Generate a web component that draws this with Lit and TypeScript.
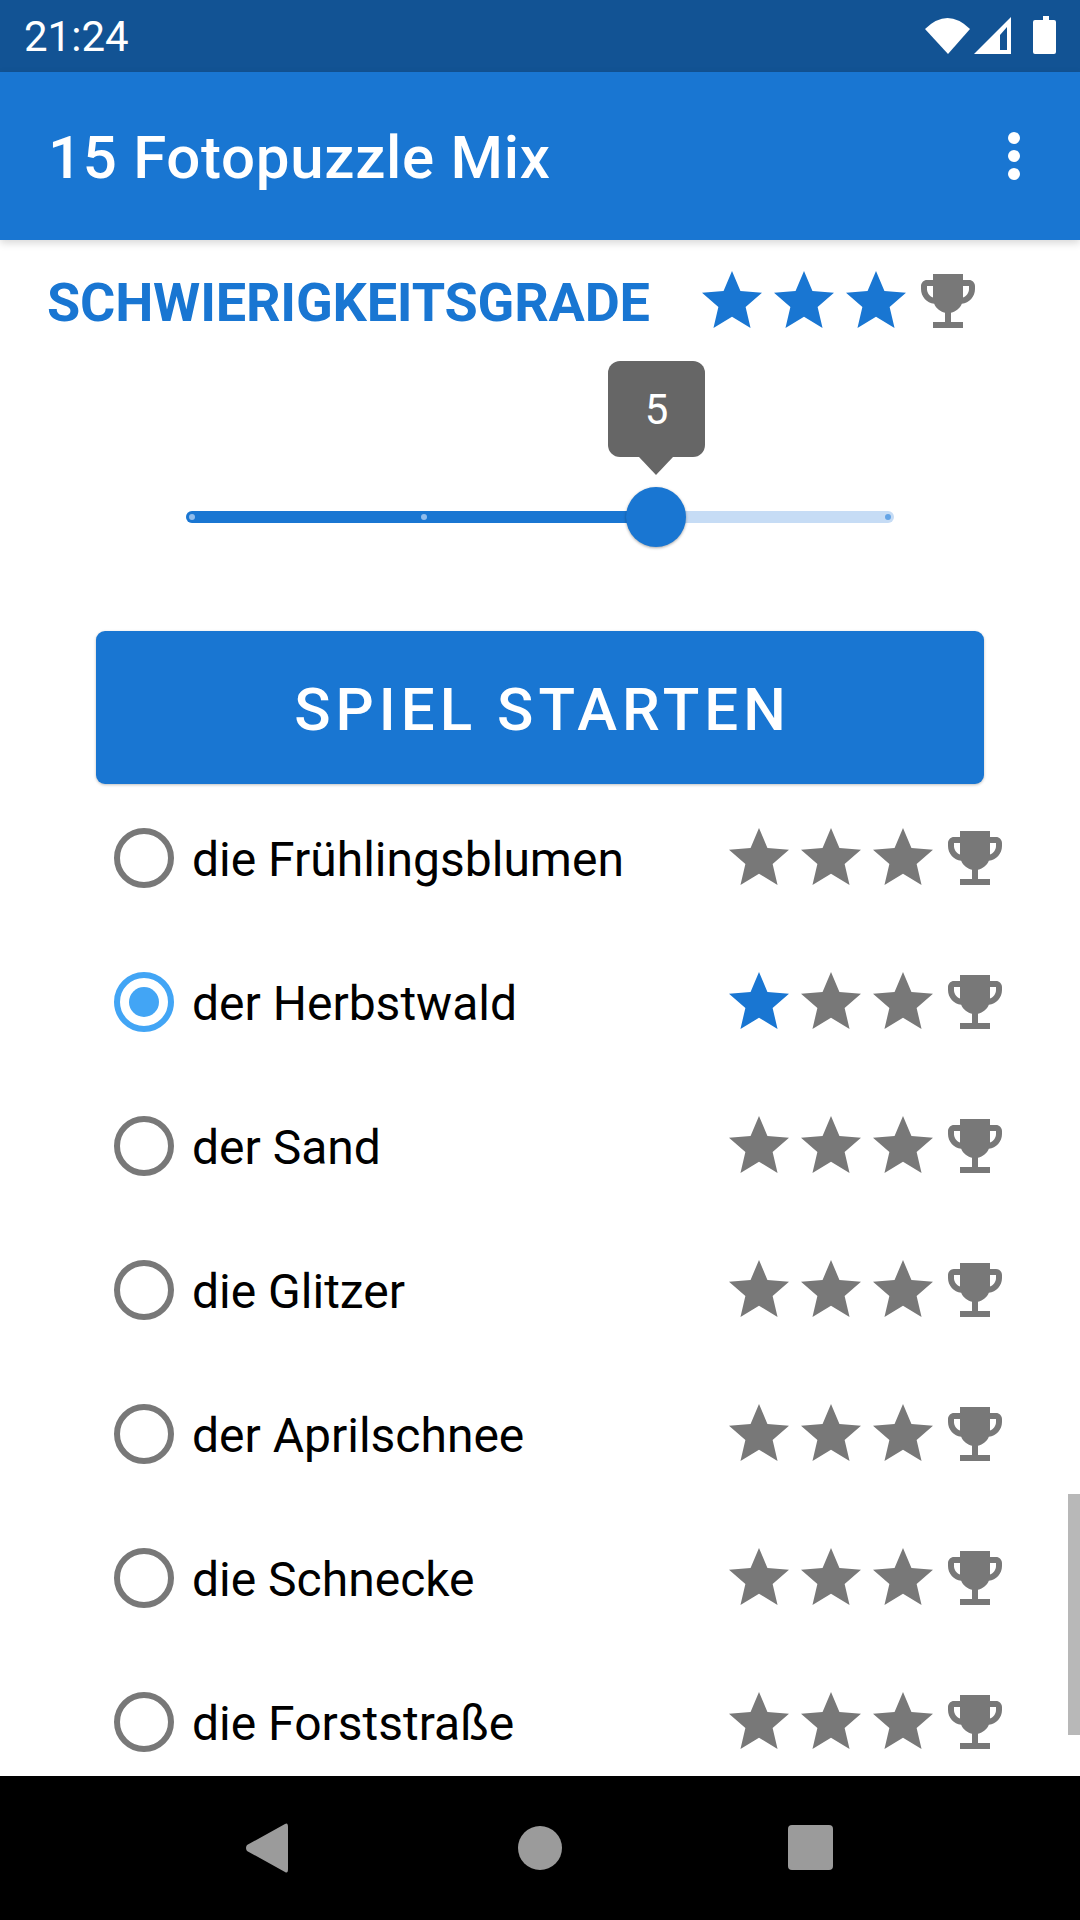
import { LitElement, html, css, svg } from "lit";
import { customElement } from "lit/decorators.js";

const STAR = "M12 17.27L18.18 21l-1.64-7.03L22 9.24l-7.19-.61L12 2 9.19 8.63 2 9.24l5.46 4.73L5.82 21z";
const TROPHY = "M19 5h-2V3H7v2H5c-1.1 0-2 .9-2 2v1c0 2.55 1.92 4.63 4.39 4.94.63 1.5 1.98 2.63 3.61 2.96V19H7v2h10v-2h-4v-3.1c1.63-.33 2.98-1.46 3.61-2.96C19.08 12.63 21 10.55 21 8V7c0-1.1-.9-2-2-2zM5 8V7h2v3.82C5.84 10.4 5 9.3 5 8zm14 0c0 1.3-.84 2.4-2 2.82V7h2v1z";

const icon = (d: string, on: boolean) => html`<svg class="ic ${on ? "on" : "off"}" viewBox="0 0 24 24"><path d=${d}></path></svg>`;
const rating = (n: number) => html`<div class="rating">
  ${[0, 1, 2].map((i) => icon(STAR, i < n))}${icon(TROPHY, false)}
</div>`;

const ITEMS = [
  "die Frühlingsblumen", "der Herbstwald", "der Sand", "die Glitzer",
  "der Aprilschnee", "die Schnecke", "die Forststraße",
];

@customElement("app-root")
export class AppRoot extends LitElement {
  static styles = css`
    :host { display: flex; flex-direction: column; width: 1080px; height: 1920px; background: #fff; font-family: Roboto, sans-serif; overflow: hidden; }
    .status { height: 72px; background: #125394; color: #fff; display: flex; align-items: center; justify-content: space-between; padding-left: 24px; font-size: 42px; flex: none; }
    .status svg { width: 160px; height: 72px; fill: #fff; display: block; }
    .bar { height: 168px; flex: none; background: #1976d2; color: #fff; display: flex; align-items: center; justify-content: space-between; padding: 0 60px 0 48px; box-shadow: 0 3px 8px rgba(0,0,0,.16); position: relative; z-index: 2; }
    .title { font-size: 60px; font-weight: 500; letter-spacing: 0.7px; padding-top: 2px; }
    .dots { display: flex; flex-direction: column; gap: 6px; }
    .dots i { width: 12px; height: 12px; border-radius: 50%; background: #fff; display: block; }
    .content { flex: 1; min-height: 0; overflow: hidden; position: relative; display: flex; flex-direction: column; }
    .head { display: flex; align-items: center; padding: 25px 0 0 47px; height: 72px; flex: none; box-sizing: content-box; }
    .heading { font-size: 54px; font-weight: 700; letter-spacing: -0.2px; color: #1976d2; width: 649px; white-space: nowrap; padding-top: 3px; }
    .rating { display: flex; flex: none; }
    .ic { width: 72px; height: 72px; display: block; }
    .ic.on { fill: #1976d2; }
    .ic.off { fill: #787878; }
    .slider { position: relative; height: 294px; flex: none; }
    .track { position: absolute; left: 186px; top: 174px; width: 708px; height: 12px; border-radius: 6px; background: #c6dcf5; }
    .fill { position: absolute; left: 0; top: 0; bottom: 0; width: 470px; border-radius: 6px 0 0 6px; background: #1976d2; }
    .tick { position: absolute; top: 3px; width: 6px; height: 6px; border-radius: 50%; background: #8fbcec; }
    .tick.end { background: #64a4e6; }
    .thumb { position: absolute; left: 626px; top: 150px; width: 60px; height: 60px; border-radius: 50%; background: #1976d2; box-shadow: 0 1px 3px rgba(0,0,0,.35); }
    .bubble { position: absolute; left: 608px; top: 24px; width: 97px; height: 96px; border-radius: 12px; background: #666; color: #fff; font-size: 42px; display: flex; align-items: center; justify-content: center; }
    .bubble::after { content: ""; position: absolute; left: 31px; top: 96px; border-left: 17px solid transparent; border-right: 17px solid transparent; border-top: 18px solid #666; }
    .start { margin: 0 96px; height: 153px; flex: none; border-radius: 9px; background: #1976d2; color: #fff; font-size: 60px; font-weight: 500; letter-spacing: 5px; padding: 3px 0 0 5px; box-sizing: border-box; display: flex; align-items: center; justify-content: center; box-shadow: 0 1px 3px rgba(0,0,0,.25); }
    .list { margin-top: 2px; display: flex; flex-direction: column; }
    .row { height: 144px; flex: none; display: flex; align-items: center; padding-left: 114px; }
    .radio { width: 60px; height: 60px; box-sizing: border-box; border-radius: 50%; border: 6px solid #787878; flex: none; display: flex; align-items: center; justify-content: center; }
    .radio.sel { border-color: #42a5f5; }
    .radio.sel i { width: 30px; height: 30px; border-radius: 50%; background: #42a5f5; display: block; }
    .label { font-size: 48px; color: #000; margin-left: 18px; padding-top: 2px; flex: 1; white-space: nowrap; }
    .row .rating { margin-right: 69px; }
    .scroll { position: absolute; right: 0; top: 1254px; width: 12px; height: 241px; background: #b8b8b8; }
    .nav { height: 144px; flex: none; background: #000; display: flex; }
    .nav svg { width: 1080px; height: 144px; display: block; fill: #9b9b9b; }
  `;

  render() {
    return html`
      <div class="status">
        <span>21:24</span>
        <svg viewBox="920 0 160 72">
          ${svg`<path d="M925 29 Q947.5 7 970 29 L948 54 Z"></path>
          <path fill-rule="evenodd" d="M974 54 L1011 17 V54 Z M1000 35 V50 H1007 V27 Z"></path>
          <path d="M1043 16 H1049 V20 H1054 Q1056 20 1056 22 V52 Q1056 54 1054 54 H1035 Q1033 54 1033 52 V22 Q1033 20 1035 20 H1043 Z"></path>`}
        </svg>
      </div>
      <div class="bar">
        <div class="title">15 Fotopuzzle Mix</div>
        <div class="dots"><i></i><i></i><i></i></div>
      </div>
      <div class="content">
        <div class="head">
          <div class="heading">SCHWIERIGKEITSGRADE</div>
          ${rating(3)}
        </div>
        <div class="slider">
          <div class="track">
            <div class="fill"></div>
            <div class="tick" style="left:3px"></div>
            <div class="tick" style="left:235px"></div>
            <div class="tick end" style="left:699px"></div>
          </div>
          <div class="thumb"></div>
          <div class="bubble">5</div>
        </div>
        <div class="start">SPIEL STARTEN</div>
        <div class="list">
          ${ITEMS.map((t, i) => html`<div class="row">
            <div class="radio ${i === 1 ? "sel" : ""}">${i === 1 ? html`<i></i>` : ""}</div>
            <div class="label">${t}</div>
            ${rating(i === 1 ? 1 : 0)}
          </div>`)}
        </div>
        <div class="scroll"></div>
      </div>
      <div class="nav">
        <svg viewBox="0 0 1080 144">
          ${svg`<path d="M285 48 Q288 46 288 51 V93 Q288 98 285 96 L247 75 Q245 72 247 69 Z"></path>
          <circle cx="540" cy="72" r="22"></circle>
          <rect x="788" y="49" width="45" height="45" rx="4"></rect>`}
        </svg>
      </div>
    `;
  }
}
